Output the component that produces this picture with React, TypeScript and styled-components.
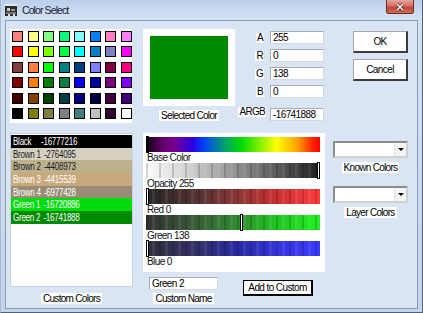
import styled, { createGlobalStyle } from "styled-components";

const GlobalStyle = createGlobalStyle`
  html, body { margin: 0; padding: 0; }
  body {
    width: 423px;
    height: 313px;
    overflow: hidden;
    font-family: "Liberation Sans", Arial, sans-serif;
  }
`;

const Window = styled.div`
  width: 423px;
  height: 313px;
  box-sizing: border-box;
  display: flex;
  flex-direction: column;
  background: linear-gradient(180deg, #bccfe9 0px, #d3e1f2 18px, #cbdaed 60%, #c3d4e9 100%);
  border-left: 1px solid #a8bbd3;
  border-right: 1px solid #4f6078;
  border-bottom: 1px solid #4f6078;
`;

const TitleBar = styled.div`
  height: 20px;
  display: flex;
  align-items: flex-start;
  padding-left: 4px;
`;

const TitleIcon = styled.svg`
  margin-top: 4px;
  width: 12px;
  height: 12px;
`;

const TitleText = styled.span`
  margin-left: 5px;
  margin-top: 4px;
  font-size: 10.5px;
  letter-spacing: -0.9px;
  color: #15203a;
`;

const CloseButton = styled.div`
  margin-left: auto;
  margin-right: 8px;
  width: 28px;
  height: 14px;
  box-sizing: border-box;
  border: 1px solid #6e2a22;
  border-top: none;
  border-radius: 0 0 3px 3px;
  background: linear-gradient(180deg, #e6a597 0%, #d66e5e 45%, #c0463a 55%, #cf6a58 100%);
  display: flex;
  align-items: center;
  justify-content: center;
`;

const Client = styled.div`
  flex: 1;
  margin: 0 4px 3px 4px;
  border: 1px solid #8a9bb3;
  background: #d9e5f2;
  padding: 8px 0 0 4px;
  display: flex;
  flex-direction: column;
`;

const TopRow = styled.div`
  height: 104px;
  display: flex;
  align-items: flex-start;
`;

const BottomRow = styled.div`
  display: flex;
  align-items: flex-start;
`;

const Palette = styled.div`
  width: 122px;
  height: 94px;
  box-sizing: border-box;
  background: #fff;
  padding: 2px 0 0 2px;
  display: grid;
  grid-template-columns: repeat(8, 11px);
  grid-template-rows: repeat(6, 11px);
  column-gap: 4.5px;
  row-gap: 4.4px;
  align-content: start;
`;

const Swatch = styled.div<{ $c: string }>`
  width: 11px;
  height: 11px;
  box-sizing: border-box;
  border: 1px solid #000;
  background: ${(p) => p.$c};
`;

const Caption = styled.div`
  background: #fff;
  font-size: 10px;
  line-height: 11px;
  height: 11px;
  letter-spacing: -0.7px;
  color: #000;
  padding: 0 2px;
  white-space: nowrap;
`;

const SelectedCol = styled.div`
  margin-left: 11px;
  width: 92px;
  display: flex;
  flex-direction: column;
  align-items: center;
`;

const ColorFrame = styled.div`
  width: 92px;
  height: 77px;
  box-sizing: border-box;
  padding: 7px;
  background: #fff;
  margin-bottom: 4px;
`;

const ColorFill = styled.div<{ $c: string }>`
  width: 100%;
  height: 100%;
  background: ${(p) => p.$c};
`;

const Fields = styled.div`
  margin-left: 6px;
  margin-top: 2px;
  display: grid;
  grid-template-columns: 25px 54px;
  grid-auto-rows: 13px;
  column-gap: 4px;
  row-gap: 5px;
`;

const FieldLabel = styled(Caption)<{ $gap?: boolean }>`
  justify-self: end;
  align-self: center;
  margin-right: ${(p) => (p.$gap ? 0 : 2)}px;
  margin-top: ${(p) => (p.$gap ? 5 : 0)}px;
  padding: 0 1px;
  height: 10px;
  line-height: 10px;
`;

const TextBox = styled.div<{ $w?: number; $gap?: boolean }>`
  width: ${(p) => p.$w ?? 54}px;
  height: 13px;
  box-sizing: border-box;
  margin-top: ${(p) => (p.$gap ? 5 : 0)}px;
  background: #fff;
  border: 1px solid;
  border-color: #a9adb3 #d5dae1 #d5dae1 #a9adb3;
  font-size: 10px;
  line-height: 11px;
  letter-spacing: -0.6px;
  padding-left: 2px;
  color: #000;
  white-space: nowrap;
`;

const ButtonCol = styled.div`
  margin-left: 29px;
  margin-top: 2px;
  display: flex;
  flex-direction: column;
  gap: 6px;
`;

const Button = styled.div<{ $w: number; $h: number; $dark?: boolean }>`
  width: ${(p) => p.$w}px;
  height: ${(p) => p.$h}px;
  box-sizing: border-box;
  background: #fff;
  border: 1px solid ${(p) => (p.$dark ? "#000" : "#a7a7a7")};
  border-right: 2px solid ${(p) => (p.$dark ? "#000" : "#3c3c3c")};
  border-bottom: 2px solid ${(p) => (p.$dark ? "#000" : "#3c3c3c")};
  display: flex;
  align-items: center;
  justify-content: center;
  font-size: 10px;
  letter-spacing: -0.6px;
  color: #000;
`;

const LeftCol = styled.div`
  width: 123px;
  display: flex;
  flex-direction: column;
  align-items: center;
`;

const List = styled.div`
  width: 123px;
  height: 154px;
  box-sizing: border-box;
  background: #fff;
  border: 1px solid #c9d3df;
  padding-top: 1px;
  margin-bottom: 6px;
`;

const ListRow = styled.div<{ $bg: string; $fg: string }>`
  height: 12.7px;
  display: flex;
  align-items: center;
  padding-left: 2px;
  background: ${(p) => p.$bg};
  color: ${(p) => p.$fg};
  font-size: 10px;
  white-space: nowrap;
`;

/* the reference text is drawn narrow, so squeeze the row text horizontally */
const RowText = styled.span`
  display: inline-flex;
  letter-spacing: -0.3px;
  transform: scaleX(0.8);
  transform-origin: left center;
`;

const RowName = styled.span`
  min-width: 31px;
  margin-right: 4px;
`;

const MidCol = styled.div`
  margin-left: 10px;
  width: 182px;
  display: flex;
  flex-direction: column;
`;

const SliderPanel = styled.div`
  width: 182px;
  height: 139px;
  box-sizing: border-box;
  background: #fff;
  padding: 4px 5px 0 3px;
`;

const Bar = styled.div<{ $bg: string; $stripes?: boolean }>`
  position: relative;
  height: 15px;
  background-image: ${(p) =>
    p.$stripes
      ? `repeating-linear-gradient(to right, rgba(0,0,0,0.16) 0 2px, transparent 2px 6px, rgba(255,255,255,0.08) 6px 9px, transparent 9px 13px), ${p.$bg}`
      : p.$bg};
`;

const Thumb = styled.div<{ $left: number; $solid?: boolean }>`
  position: absolute;
  top: -1px;
  left: ${(p) => p.$left}px;
  width: 3px;
  height: 17px;
  box-sizing: border-box;
  border: 1px solid #000;
  background: ${(p) => (p.$solid ? "#000" : "#fff")};
`;

const BarLabel = styled.div`
  height: 11px;
  line-height: 11px;
  font-size: 10px;
  letter-spacing: -0.6px;
  color: #111;
  padding-left: 1px;
`;

const NameRow = styled.div`
  display: flex;
  align-items: flex-start;
  margin-top: 5px;
`;

const NameCol = styled.div`
  margin-left: 6px;
  width: 69px;
  display: flex;
  flex-direction: column;
  align-items: center;
  gap: 3px;
`;

const AddWrap = styled.div`
  margin-left: 25px;
  margin-top: 3px;
`;

const RightCol = styled.div`
  margin-left: 8px;
  width: 75px;
  padding-top: 8px;
  display: flex;
  flex-direction: column;
  align-items: center;
`;

const Combo = styled.div<{ $top: number }>`
  margin-top: ${(p) => p.$top}px;
  margin-bottom: 4px;
  width: 75px;
  height: 17px;
  box-sizing: border-box;
  background: #fff;
  border: 2px solid;
  border-color: #8d8d8d #d0d0d0 #d0d0d0 #8d8d8d;
  display: flex;
  justify-content: flex-end;
  align-items: stretch;
`;

const ComboArrow = styled.div`
  width: 11px;
  display: flex;
  align-items: center;
  justify-content: center;
  background: #f4f4f4;
  border-left: 1px solid #e2e2e2;
  &::after {
    content: "";
    border-left: 3px solid transparent;
    border-right: 3px solid transparent;
    border-top: 3px solid #000;
  }
`;

const palette = [
  ["#FF8080", "#FFFF80", "#80FF80", "#00FF80", "#80FFFF", "#0080FF", "#FF80C0", "#FF80FF"],
  ["#FF0000", "#FFFF00", "#80FF00", "#00FF40", "#00FFFF", "#0080C0", "#8080C0", "#FF00FF"],
  ["#804040", "#FF8040", "#00FF00", "#008080", "#004080", "#8080FF", "#800040", "#FF0080"],
  ["#800000", "#FF8000", "#008000", "#008040", "#0000FF", "#0000A0", "#800080", "#8000FF"],
  ["#400000", "#804000", "#004000", "#004040", "#000080", "#000040", "#400040", "#400080"],
  ["#000000", "#808000", "#808040", "#808080", "#408080", "#C0C0C0", "#300030", "#FFFFFF"],
];

const customColors = [
  { name: "Black", value: "-16777216", bg: "#000000", fg: "#fff" },
  { name: "Brown 1", value: "-2764095", bg: "#d6d1be", fg: "#1a1a2a" },
  { name: "Brown 2", value: "-4408973", bg: "#bdb18c", fg: "#1a1a2a" },
  { name: "Brown 3", value: "-4415539", bg: "#c8a97b", fg: "#fff" },
  { name: "Brown 4", value: "-6977428", bg: "#998c77", fg: "#fff" },
  { name: "Green 1", value: "-16720886", bg: "#00dc0a", fg: "#fff" },
  { name: "Green 2", value: "-16741888", bg: "#008a00", fg: "#fff" },
];

const sliders = [
  {
    label: "Base Color",
    bg: "linear-gradient(to right, #100010 0%, #5e0066 9%, #7a0090 16%, #2a00e0 27%, #0040ff 33%, #00a070 45%, #00dc00 55%, #80f000 65%, #ffff00 75%, #ffa000 87%, #ff2000 96%, #ff0000 100%)",
    thumb: 0,
    solid: true,
    stripes: false,
  },
  {
    label: "Opacity 255",
    bg: "linear-gradient(to right, #fcfcfc 0%, #d0d0d0 25%, #959595 50%, #555555 78%, #1e1e1e 100%)",
    thumb: 171,
    stripes: true,
  },
  {
    label: "Red 0",
    bg: "linear-gradient(to right, #262626 0%, #553232 30%, #8a3636 52%, #c33030 72%, #ff3c3c 100%)",
    thumb: 0,
    stripes: true,
  },
  {
    label: "Green 138",
    bg: "linear-gradient(to right, #323232 0%, #385a38 28%, #2f8a2f 52%, #22c422 75%, #22f022 100%)",
    thumb: 94,
    stripes: true,
  },
  {
    label: "Blue 0",
    bg: "linear-gradient(to right, #2e2e36 0%, #30306a 30%, #2828a0 52%, #3434d8 75%, #3a3aff 100%)",
    thumb: 0,
    stripes: true,
  },
];

const fields = [
  { label: "A", value: "255" },
  { label: "R", value: "0" },
  { label: "G", value: "138" },
  { label: "B", value: "0" },
];

export default function App() {
  return (
    <>
      <GlobalStyle />
      <Window>
        <TitleBar>
          <TitleIcon viewBox="0 0 12 12">
            <rect x="0" y="0" width="12" height="12" fill="#2c2c2c" />
            <rect x="0" y="0" width="12" height="2" fill="#e8e8e8" />
            <rect x="2" y="4" width="3" height="3" fill="#cfcfcf" />
            <rect x="6" y="5" width="4" height="2" fill="#9a9a9a" />
            <rect x="1" y="8" width="10" height="2" fill="#7a7a7a" />
            <rect x="3" y="10" width="2" height="2" fill="#e0e0e0" />
            <rect x="8" y="10" width="2" height="2" fill="#e0e0e0" />
          </TitleIcon>
          <TitleText>Color Select</TitleText>
          <CloseButton>
            <svg width="10" height="8" viewBox="0 0 10 8">
              <path d="M2 1 L8 7 M8 1 L2 7" stroke="#5a1c15" strokeWidth="3" />
              <path d="M2 1 L8 7 M8 1 L2 7" stroke="#fff" strokeWidth="1.6" />
            </svg>
          </CloseButton>
        </TitleBar>
        <Client>
          <TopRow>
            <Palette>
              {palette.flat().map((c, i) => (
                <Swatch key={i} $c={c} />
              ))}
            </Palette>
            <SelectedCol>
              <ColorFrame>
                <ColorFill $c="#008a00" />
              </ColorFrame>
              <Caption>Selected Color</Caption>
            </SelectedCol>
            <Fields>
              {fields.map((f) => [
                <FieldLabel key={f.label + "l"}>{f.label}</FieldLabel>,
                <TextBox key={f.label + "v"}>{f.value}</TextBox>,
              ])}
              <FieldLabel $gap>ARGB</FieldLabel>
              <TextBox $gap>-16741888</TextBox>
            </Fields>
            <ButtonCol>
              <Button $w={55} $h={22}>OK</Button>
              <Button $w={55} $h={22}>Cancel</Button>
            </ButtonCol>
          </TopRow>
          <BottomRow>
            <LeftCol>
              <List>
                {customColors.map((c) => (
                  <ListRow key={c.name} $bg={c.bg} $fg={c.fg}>
                    <RowText>
                      <RowName>{c.name}</RowName>
                      <span>{c.value}</span>
                    </RowText>
                  </ListRow>
                ))}
              </List>
              <Caption>Custom Colors</Caption>
            </LeftCol>
            <MidCol>
              <SliderPanel>
                {sliders.map((s) => (
                  <div key={s.label}>
                    <Bar $bg={s.bg} $stripes={s.stripes}>
                      <Thumb $left={s.thumb} $solid={s.solid} />
                    </Bar>
                    <BarLabel>{s.label}</BarLabel>
                  </div>
                ))}
              </SliderPanel>
              <NameRow>
                <NameCol>
                  <TextBox $w={69}>Green 2</TextBox>
                  <Caption>Custom Name</Caption>
                </NameCol>
                <AddWrap>
                  <Button $w={70} $h={16} $dark>
                    Add to Custom
                  </Button>
                </AddWrap>
              </NameRow>
            </MidCol>
            <RightCol>
              <Combo $top={0}>
                <ComboArrow />
              </Combo>
              <Caption>Known Colors</Caption>
              <Combo $top={13}>
                <ComboArrow />
              </Combo>
              <Caption>Layer Colors</Caption>
            </RightCol>
          </BottomRow>
        </Client>
      </Window>
    </>
  );
}
